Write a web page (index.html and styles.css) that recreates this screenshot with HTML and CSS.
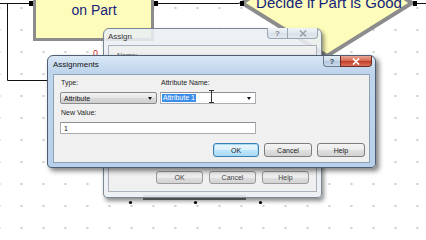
FILE: index.html
```html
<!DOCTYPE html>
<html lang="en">
<head>
  <meta charset="UTF-8" />
  <title>Assignments</title>
  <link rel="stylesheet" href="styles.css">
</head>
<body>

  <div class="canvas">

    <svg class="diagram" width="426" height="240" viewBox="0 0 426 240">
      <path class="wire" d="M0 3.5H29 M7.5 3.5V80.5H48 M158 3.5H240 M417 3.5H426" />
      <rect class="process" x="34.5" y="-40" width="118" height="79.5" />
      <text class="node-text" x="94" y="-1">Place Attribute</text>
      <text class="node-text" x="94" y="15">on Part</text>
      <polygon class="decide" points="242,3 327,-52 412,3 327,56" />
      <text class="node-text" x="329" y="8">Decide if Part is Good</text>
      <rect class="port" x="29" y="1" width="4" height="5" />
      <rect class="port" x="154" y="1" width="4" height="5" />
      <rect class="port" x="240" y="1" width="4" height="5" />
      <rect class="port" x="413" y="1" width="4" height="5" />
      <text class="counter" x="93" y="56">0</text>
      <rect class="module-shadow" x="143" y="195" width="103" height="5" />
      <circle class="port" cx="130.5" cy="202.5" r="1.6" />
      <circle class="port" cx="195.5" cy="202.5" r="1.6" />
      <circle class="port" cx="260.5" cy="202.5" r="1.6" />
    </svg>

    <!-- dialog behind -->
    <section class="window window--back">
      <header class="titlebar">
        <span class="title">Assign</span>
        <div class="caption">
          <span class="cap cap--help">?</span>
          <span class="cap cap--close">
            <svg width="8" height="7" viewBox="0 0 8 7"><path d="M1 0.5L7 6.5M7 0.5L1 6.5" /></svg>
          </span>
        </div>
      </header>
      <div class="client">
        <span class="lbl lbl--name">Name:</span>
        <div class="buttons">
          <button class="btn">OK</button>
          <button class="btn">Cancel</button>
          <button class="btn">Help</button>
        </div>
      </div>
    </section>

    <!-- active dialog -->
    <section class="window window--front">
      <header class="titlebar">
        <span class="title">Assignments</span>
        <div class="caption">
          <span class="cap cap--help">?</span>
          <span class="cap cap--close">
            <svg width="8" height="7" viewBox="0 0 8 7"><path d="M1 0.5L7 6.5M7 0.5L1 6.5" /></svg>
          </span>
        </div>
      </header>
      <div class="client">
        <div class="fields">
          <div class="field">
            <span class="lbl">Type:</span>
            <div class="select">Attribute<i class="caret"></i></div>
          </div>
          <div class="field">
            <span class="lbl">Attribute Name:</span>
            <div class="combo"><span class="sel">Attribute 1</span><i class="caret"></i></div>
          </div>
          <div class="field field--wide">
            <span class="lbl">New Value:</span>
            <div class="input">1</div>
          </div>
        </div>
        <div class="buttons">
          <button class="btn btn--default">OK</button>
          <button class="btn btn--wide">Cancel</button>
          <button class="btn btn--wide">Help</button>
        </div>
      </div>
    </section>

    <svg class="ibeam" width="7" height="13" viewBox="0 0 7 13">
      <path d="M1 0.5H6 M3.5 0.5V12.5 M1 12.5H6" />
    </svg>

  </div>

</body>
</html>
```

FILE: styles.css
```css
html, body {
  margin: 0;
  padding: 0;
  background: #fff;
  font-family: "Liberation Sans", Arial, sans-serif;
}

.canvas {
  position: relative;
  width: 426px;
  height: 240px;
  overflow: hidden;
  background-color: #fff;
  background-image: radial-gradient(circle, #bdbdbd 0.6px, transparent 1.1px);
  background-size: 22px 22px;
  background-position: 10.5px -3px;
}

/* flowchart */
.diagram {
  position: absolute;
  left: 0;
  top: 0;
}

.wire {
  fill: none;
  stroke: #111;
  stroke-width: 1;
}

.process {
  fill: #fdfcbb;
  stroke: #8c8c8c;
  stroke-width: 3;
}

.decide {
  fill: #fdfcbb;
  stroke: #8c8c8c;
  stroke-width: 4;
}

.node-text {
  font-family: "Liberation Sans", Arial, sans-serif;
  font-size: 14px;
  fill: #17247c;
  text-anchor: middle;
}

.decide + .node-text {
  font-size: 15px;
}

.port {
  fill: #000;
}

.counter {
  font-family: "Liberation Sans", Arial, sans-serif;
  font-size: 9px;
  fill: #d42a2a;
}

.module-shadow {
  fill: #7a7a7a;
}

/* windows */
.window {
  position: absolute;
  box-sizing: border-box;
  display: flex;
  flex-direction: column;
  border: 1px solid;
  border-radius: 6px 6px 4px 4px;
}

.window--back {
  left: 103px;
  top: 28px;
  width: 219px;
  height: 170px;
  padding: 0 4px 5px;
  background: rgba(234, 239, 245, 0.88);
  border-color: #7b8794;
  box-shadow: 2px 3px 4px rgba(0, 0, 0, 0.45);
}

.window--front {
  left: 47px;
  top: 55px;
  width: 329px;
  height: 113px;
  padding: 0 5px 4px;
  background: linear-gradient(#d9e7f5, #bfd5ec 16px, #b8d0e9);
  border-color: #4d5e72;
  box-shadow: 3px 3px 5px rgba(0, 0, 0, 0.5);
}

.titlebar {
  flex: none;
  display: flex;
  justify-content: space-between;
  align-items: flex-start;
}

.window--back .titlebar {
  height: 16px;
}

.window--front .titlebar {
  height: 18px;
}

.title {
  font-size: 8px;
  line-height: 10px;
  color: #111;
}

.window--back .title {
  padding-top: 3px;
  color: #333;
}

.window--front .title {
  padding-top: 4px;
}

.caption {
  display: flex;
}

.window--back .caption {
  margin: -1px -1px 0 0;
}

.window--front .caption {
  margin-right: -2px;
}

.cap {
  box-sizing: border-box;
  height: 11px;
  display: flex;
  align-items: center;
  justify-content: center;
  border: 1px solid;
  border-top: none;
  font-size: 8px;
  font-weight: bold;
}

.cap--help {
  border-radius: 0 0 0 4px;
  border-right: none;
}

.cap--close {
  border-radius: 0 0 4px 0;
}

.cap svg path {
  fill: none;
  stroke-width: 1.6;
}

.window--back .cap {
  background: linear-gradient(#f1f4f7, #e2e8ee 50%, #d8dfe7 51%, #e4e9ef);
  border-color: #9aa6b3;
  color: #7f8a96;
}

.window--back .cap--help { width: 20px; }
.window--back .cap--close { width: 31px; }
.window--back .cap svg path { stroke: #9aa3ad; }

.window--front .cap--help {
  width: 17px;
  background: linear-gradient(#e4edf6, #c9d9ea 50%, #b4c8de 51%, #c9d9eb);
  border-color: #6b7d92;
  color: #3a4656;
}

.window--front .cap--close {
  width: 32px;
  background: linear-gradient(#eaa796, #d4654f 50%, #c13b25 51%, #d9735d);
  border-color: #6f2b22;
}

.window--front .cap svg path { stroke: #fff; }

.client {
  flex: 1;
  box-sizing: border-box;
  display: flex;
  flex-direction: column;
  background: #f0f0f0;
  border: 1px solid #8ea2b7;
}

.window--back .client {
  padding: 5px 7px 7px;
  border-color: #aab3bd;
}

.window--front .client {
  padding: 3px 4px 0 6px;
}

.lbl {
  font-size: 7px;
  line-height: 10px;
  color: #222;
  padding-left: 1px;
}

.lbl--name {
  color: #555;
}

.fields {
  display: grid;
  grid-template-columns: 97px 96px;
  column-gap: 3px;
  row-gap: 4px;
}

.field {
  display: flex;
  flex-direction: column;
  gap: 4px;
}

.field--wide {
  grid-column: 1 / -1;
}

.select,
.combo,
.input {
  box-sizing: border-box;
  position: relative;
  height: 12px;
  display: flex;
  align-items: center;
  font-size: 7px;
  color: #111;
}

.select {
  padding-left: 3px;
  background: linear-gradient(#f3f3f3, #e6e6e6 50%, #d9d9d9 51%, #d0d0d0);
  border: 1px solid #8b8b8b;
  border-radius: 2px;
}

.combo,
.input {
  background: #fff;
  border: 1px solid #abadb3;
  border-top-color: #8e9097;
}

.combo {
  padding-left: 1px;
}

.input {
  padding-left: 3px;
}

.sel {
  height: 8px;
  line-height: 8px;
  padding: 0 1px;
  background: #3d8ee8;
  color: #fff;
}

.caret {
  position: absolute;
  right: 4px;
  top: 4px;
  width: 0;
  height: 0;
  border-left: 2.5px solid transparent;
  border-right: 2.5px solid transparent;
  border-top: 3px solid #111;
}

.buttons {
  display: flex;
  justify-content: flex-end;
  gap: 5px;
  margin-top: 9px;
}

.window--back .buttons {
  margin-top: auto;
  gap: 6px;
}

.btn {
  box-sizing: border-box;
  width: 46px;
  height: 14px;
  padding: 0;
  font-family: "Liberation Sans", Arial, sans-serif;
  font-size: 7px;
  color: #222;
  background: linear-gradient(#f4f4f4, #ececec 50%, #dfdfdf 51%, #d3d3d3);
  border: 1px solid #7d7d7d;
  border-radius: 3px;
}

.btn--wide {
  width: 48px;
}

.window--back .btn {
  width: 47px;
  height: 13px;
  color: #444;
  border-color: #9a9a9a;
}

.btn--default {
  background: linear-gradient(#eaf6fd, #d9f0fc 50%, #bee6fd 51%, #a9dbf6);
  border-color: #3c7fb1;
  box-shadow: inset 0 0 0 1px #a8daf6;
}

.ibeam {
  position: absolute;
  left: 208px;
  top: 90px;
}

.ibeam path {
  fill: none;
  stroke: #333;
  stroke-width: 1;
}
```
